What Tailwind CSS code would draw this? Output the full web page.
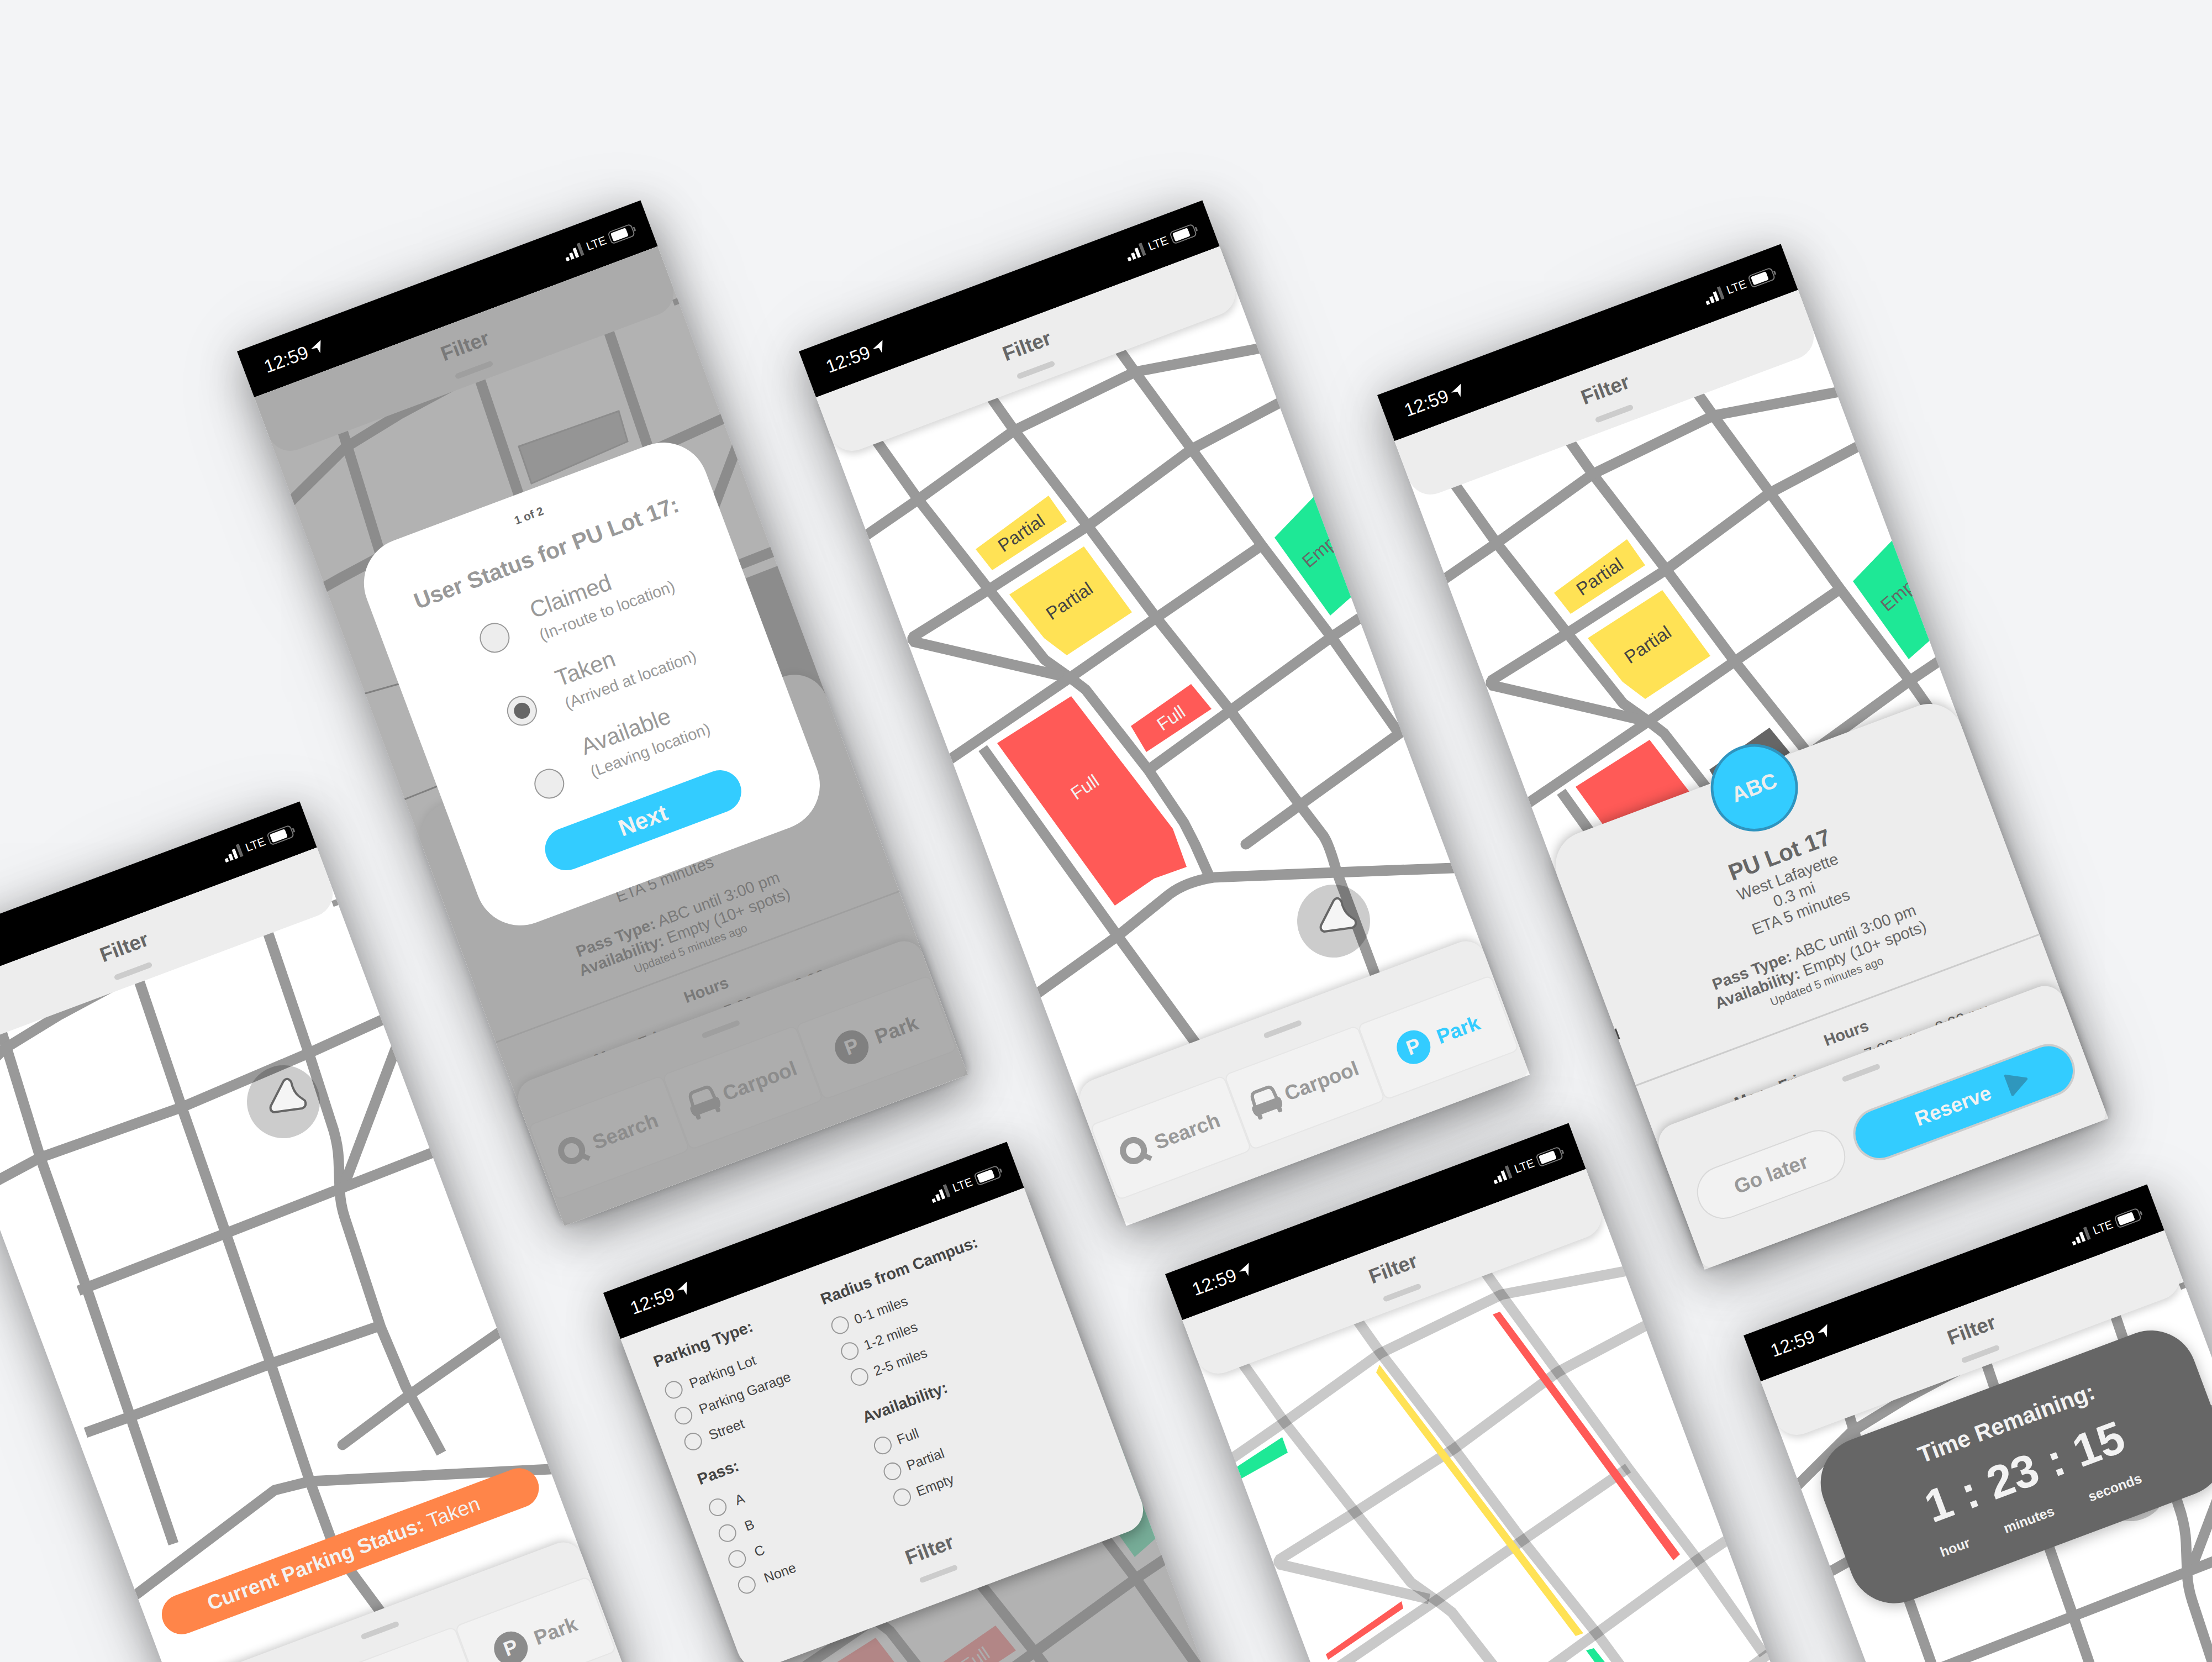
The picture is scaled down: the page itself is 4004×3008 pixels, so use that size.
<!DOCTYPE html>
<html lang="en">
<head>
<meta charset="utf-8">
<meta name="viewport" content="width=device-width, initial-scale=1">
<title>Campus parking – screens</title>
<script src="https://cdn.jsdelivr.net/npm/@tailwindcss/browser@4"></script>
</head>
<body class="bg-[#f3f4f6] font-['Liberation_Sans',Arial,sans-serif] text-[#666]">

<!-- Shared drawings -->
<svg class="hidden" aria-hidden="true">
  <symbol id="i-nav" viewBox="0 0 24 24"><path d="M23 1 L14 23 L12 12 L1 10 Z" fill="#fff"/></symbol>
  <symbol id="i-signal" viewBox="0 0 36 24">
    <rect x="0" y="17" width="6" height="7" rx="1" fill="#fff"/><rect x="9" y="12" width="6" height="12" rx="1" fill="#fff"/>
    <rect x="18" y="6" width="6" height="18" rx="1" fill="#fff"/><rect x="28" y="0" width="6" height="24" rx="1" fill="#666"/>
  </symbol>
  <symbol id="i-battery" viewBox="0 0 50 24">
    <rect x="1" y="1" width="44" height="22" rx="6" fill="none" stroke="#777" stroke-width="2"/>
    <rect x="5" y="4" width="29" height="16" rx="3" fill="#fff"/><path d="M47 8 a4 4 0 0 1 0 8 Z" fill="#777"/>
  </symbol>
  <symbol id="i-search" viewBox="0 0 56 56">
    <circle cx="26" cy="26" r="19" fill="none" stroke="currentColor" stroke-width="11"/>
    <path d="M37 37 L51 51" stroke="currentColor" stroke-width="9"/>
  </symbol>
  <symbol id="i-car" viewBox="0 0 56 56">
    <path d="M7 28 L8 13 Q9 4 17 4 H39 Q47 4 48 13 L49 28" fill="none" stroke="currentColor" stroke-width="6"/>
    <path d="M3 27 H53 Q56 29 56 34 Q56 42 52 46 H51 V51 Q51 54 48 54 H46 Q43 54 43 51 V46 H13 V51 Q13 54 10 54 H8 Q5 54 5 51 V46 H4 Q0 42 0 34 Q0 29 3 27 Z" fill="currentColor"/>
  </symbol>

  <!-- Streets of the west campus grid -->
  <symbol id="streets-a" viewBox="0 0 780 1690">
    <g transform="rotate(20.53)" fill="none" stroke-width="19" stroke-linejoin="round">
      <path d="M100 104 L142 164 L216 268 L344 431 L445 558 L493 592 L519 612 L633 758 L697 853 L717 892 L743 950"/>
      <path d="M320 44 L390 143 L523 316 L647 482 L781 650 L907 821 L949 876 Q960 892 973 940 L1042 1125 L1056 1163"/>
      <path d="M552 -42 L609 38 L711 177 L838 351 L964 517 L1084 688"/>
      <path d="M870 -12 L831 -5 L609 37 L390 143 L216 268 L100 348"/>
      <path d="M890 82 L868 94 L711 177 L523 316 L344 431 L206 517 L206 525 L478 588" stroke-linejoin="bevel"/>
      <path d="M838 351 L647 482 L493 589 L255 751"/>
      <path d="M1040 466 L964 517 L781 650 L636 755"/>
      <path d="M1110 675 L907 821 L809 892" stroke-linecap="round"/>
      <path d="M1210 934 L973 943 L750 952 Q700 960 670 983 L577 1058 L415 1174"/>
      <path d="M333 718 L577 1058 L717 1250 L740 1281"/>
    </g>
  </symbol>

  <!-- Streets of the east campus grid -->
  <symbol id="streets-b" viewBox="0 0 780 1690">
    <g transform="rotate(20.53)" fill="none" stroke-width="19" stroke-linejoin="round">
      <path d="M170 76 L192 147 L261 371 L343 602 L424 840 L502 1070"/>
      <path d="M420 -6 L440 52 L517 280 L597 509 L678 744 L749 957 L786 1058 Q800 1090 826 1124 L877 1193 L900 1225"/>
      <path d="M655 -90 L673 -36 L747 182 L792 322 Q800 350 801 375 L803 430 Q804 455 812 480 L877 678 L922 785 L987 906"/>
      <path d="M450 30 L398 58 L297 112 L196 174 L103 266 L80 290"/>
      <path d="M910 108 L747 182 L517 280 L261 371 L188 410 L140 437"/>
      <path d="M915 145 L903 177 L812 418"/>
      <path d="M1000 351 L971 362 L802 428 L597 508 L330 612"/>
      <path d="M874 676 L678 744 L424 840 L343 869"/>
      <path d="M1110 675 L1091 688 L930 800 L808 891" stroke-linecap="round"/>
      <path d="M1210 934 L1184 935 L749 957 L685 973 L437 1160 L415 1175"/>
      <path d="M790 -88 L816 -98" stroke-width="11"/>
    </g>
  </symbol>

  <symbol id="lots" viewBox="0 0 780 1690">
    <g transform="rotate(20.53)" font-family="'Liberation Sans', Arial, sans-serif" font-size="33" text-anchor="middle">
      <path d="M320 358 L452 261 L485 308 L350 396 Z M381 440 L516 353 L603 472 L485 550 L444 519 Z" fill="#ffe255"/>
      <path d="M861 337 L960 234 L1040 409 L962 478 Z" fill="#1ee896"/>
      <path d="M359 709 L493 624 L677 864 L702 933 L643 954 L572 1003 Z" fill="#ff5a57"/>
      <text transform="translate(409 338) rotate(-34)" fill="#444">Partial</text>
      <text transform="translate(496 461) rotate(-34)" fill="#444">Partial</text>
      <text transform="translate(923 393) rotate(-40)" fill="#666" text-anchor="start">Empty</text>
      <text transform="translate(524 798) rotate(-34)" fill="#f2f2f2">Full</text>
    </g>
  </symbol>

  <symbol id="marker" viewBox="0 0 132 132">
    <circle cx="66" cy="66" r="66" fill="#000" fill-opacity=".2"/>
    <g transform="translate(66 66) rotate(20.53) translate(-66 -66)">
      <path d="M66 29 Q73 20 80 30 Q84 48 94 56 L105 64 Q109 74 100 78 L49 85 Q41 83 43 74 Z" fill="#f5f5f5" stroke="#666" stroke-width="4" stroke-linejoin="round"/>
    </g>
  </symbol>
</svg>

<div class="relative min-h-screen w-full overflow-hidden">

  <!-- Screen: user status dialog -->
  <section class="absolute left-[429px] top-[636px] flex h-[1690px] w-[780px] origin-top-left -rotate-[20.53deg] flex-col bg-white shadow-[0_20px_80px_rgba(0,0,0,0.42),0_20px_160px_rgba(0,0,0,0.1)]">
    <svg class="absolute inset-0 size-full" viewBox="0 0 780 1690" aria-hidden="true">
      <use href="#streets-b" stroke="#999"/>
      <g transform="rotate(20.53)">
        <path d="M510 172 L691 108 L707 163 L533 239 Z" fill="#b0b0b0" stroke="#999" stroke-width="3"/>
        <path d="M917 412 L1010 376 L1110 660 L1010 660 Z" fill="#999"/>
        <path d="M225 621 L310 597 M295 814 L370 784" stroke="#777" stroke-width="3"/>
      </g>
    </svg>
    <div class="relative flex h-[89px] items-center justify-between bg-black pl-[37px] pr-[27px] text-white">
      <div class="flex items-center gap-[6px] text-[33px] leading-none">12:59<svg class="size-6"><use href="#i-nav"/></svg></div>
      <div class="flex items-center gap-[7px] text-[21px] leading-none"><svg class="h-6 w-9"><use href="#i-signal"/></svg>LTE<svg class="h-6 w-[50px]"><use href="#i-battery"/></svg></div>
    </div>
    <header class="relative flex h-[116px] flex-col items-center rounded-b-[42px] bg-[#ededed] pt-7">
      <button class="text-[37px] font-bold leading-[38px]">Filter</button>
      <span class="mt-[22px] h-[10px] w-[72px] rounded-full bg-[#ccc]"></span>
    </header>
    <div class="absolute inset-x-0 bottom-0 top-[898px] flex flex-col items-center rounded-t-[62px] bg-[#ededed] pt-[251px] text-[29px] leading-[34px] shadow-[0_-4px_16px_rgba(0,0,0,0.15)]">
      <p>ETA 5 minutes</p>
      <p class="mt-[34px]"><b>Pass Type:</b> ABC until 3:00 pm</p>
      <p><b>Availability:</b> Empty (10+ spots)</p>
      <p class="text-[21px] leading-[30px]">Updated 5 minutes ago</p>
      <span class="mt-[19px] h-[3px] w-full shrink-0 bg-[#ccc]"></span>
      <h3 class="mt-[26px] font-bold">Hours</h3>
      <dl class="mt-[15px] flex w-full pl-[157px]"><dt class="w-[251px] font-bold">Mon - Fri:</dt><dd>7:00 am – 8:00 pm</dd></dl>
    </div>
    <nav class="relative mt-auto flex h-[269px] flex-col items-center rounded-b-[16px] rounded-t-[36px] bg-[#ededed] px-1 pt-[30px] text-[37px] font-bold text-[#999] shadow-[0_-4px_16px_rgba(0,0,0,0.2)]">
      <span class="h-[10px] w-[72px] rounded-full bg-[#ccc]"></span>
      <div class="mt-[37px] grid h-[142px] w-full grid-cols-3 gap-1">
        <button class="flex items-center justify-center gap-3 rounded-[10px] bg-[#f2f2f2] pr-1 outline-2 outline-[#e6e6e6]"><svg class="size-14"><use href="#i-search"/></svg>Search</button>
        <button class="flex items-center justify-center gap-[10px] rounded-[10px] bg-[#f2f2f2] outline-2 outline-[#e6e6e6]"><svg class="size-14"><use href="#i-car"/></svg>Carpool</button>
        <button class="flex items-center justify-center gap-4 rounded-[10px] bg-[#f2f2f2] text-[#777] outline-2 outline-[#e6e6e6]"><span class="flex size-[61px] items-center justify-center rounded-full bg-[#777] text-[#ededed]">P</span>Park</button>
      </div>
    </nav>
    <div class="absolute inset-x-0 bottom-0 top-[89px] bg-[#858585]/63"></div>

    <form class="absolute left-[63px] top-[420px] flex h-[738px] w-[655px] flex-col items-center rounded-[82px] bg-white pt-8 text-[#999]">
      <p class="text-[21px] font-bold leading-6 text-[#666]">1 of 2</p>
      <h2 class="mt-[37px] pl-[12px] text-[41px] font-bold leading-[50px]">User Status for PU Lot 17:</h2>
      <fieldset class="mt-[39px] flex w-full gap-[51px] pl-[165px]">
        <div class="flex flex-col gap-[87px] pt-5">
          <input id="st-claimed" name="status" type="radio" class="size-[54px] appearance-none rounded-full border-2 border-[#999] bg-[#ededed] checked:bg-[radial-gradient(circle,#666_0_14px,#ededed_15px)]">
          <input id="st-taken" name="status" type="radio" checked class="size-[54px] appearance-none rounded-full border-2 border-[#999] bg-[#ededed] checked:bg-[radial-gradient(circle,#666_0_14px,#ededed_15px)]">
          <input id="st-available" name="status" type="radio" class="size-[54px] appearance-none rounded-full border-2 border-[#999] bg-[#ededed] checked:bg-[radial-gradient(circle,#666_0_14px,#ededed_15px)]">
        </div>
        <div class="flex flex-col gap-[38px] text-[29px] leading-[44px]">
          <label for="st-claimed"><span class="block text-[42px] leading-[50px]">Claimed</span>(In-route to location)</label>
          <label for="st-taken"><span class="block text-[42px] leading-[50px]">Taken</span>(Arrived at location)</label>
          <label for="st-available"><span class="block text-[42px] leading-[50px]">Available</span>(Leaving location)</label>
        </div>
      </fieldset>
      <button type="button" class="mt-[54px] h-[77px] w-[374px] rounded-full bg-[#3cf] text-[42px] font-bold leading-none text-[#f2f2f2]">Next</button>
    </form>
  </section>

  <!-- Screen: lot map -->
  <section class="absolute left-[1446px] top-[636px] flex h-[1690px] w-[780px] origin-top-left -rotate-[20.53deg] flex-col bg-white shadow-[0_20px_80px_rgba(0,0,0,0.42),0_20px_160px_rgba(0,0,0,0.1)]">
    <svg class="absolute inset-0 size-full" viewBox="0 0 780 1690">
      <use href="#streets-a" stroke="#999"/>
      <use href="#lots"/>
      <g transform="rotate(20.53)">
        <path d="M601 678 L710 602 L747 647 L629 725 Z" fill="#ff5a57"/>
        <text transform="translate(680 673) rotate(-34)" font-size="33" text-anchor="middle" fill="#f2f2f2">Full</text>
        <use href="#marker" transform="translate(968 1031) rotate(-20.53)" x="-66" y="-66" width="132" height="132"/>
      </g>
    </svg>
    <div class="relative flex h-[89px] items-center justify-between bg-black pl-[37px] pr-[27px] text-white">
      <div class="flex items-center gap-[6px] text-[33px] leading-none">12:59<svg class="size-6"><use href="#i-nav"/></svg></div>
      <div class="flex items-center gap-[7px] text-[21px] leading-none"><svg class="h-6 w-9"><use href="#i-signal"/></svg>LTE<svg class="h-6 w-[50px]"><use href="#i-battery"/></svg></div>
    </div>
    <header class="relative flex h-[116px] flex-col items-center rounded-b-[42px] bg-[#ededed] pt-7 shadow-[0_6px_14px_rgba(0,0,0,0.16)]">
      <button class="text-[37px] font-bold leading-[38px]">Filter</button>
      <span class="mt-[22px] h-[10px] w-[72px] rounded-full bg-[#ccc]"></span>
    </header>
    <nav class="relative mt-auto flex h-[269px] flex-col items-center rounded-b-[16px] rounded-t-[36px] bg-[#ededed] px-1 pt-[30px] text-[37px] font-bold text-[#999] shadow-[0_-4px_16px_rgba(0,0,0,0.2)]">
      <span class="h-[10px] w-[72px] rounded-full bg-[#ccc]"></span>
      <div class="mt-[37px] grid h-[142px] w-full grid-cols-3 gap-1">
        <button class="flex items-center justify-center gap-3 rounded-[10px] bg-[#f2f2f2] pr-1 outline-2 outline-[#e6e6e6]"><svg class="size-14"><use href="#i-search"/></svg>Search</button>
        <button class="flex items-center justify-center gap-[10px] rounded-[10px] bg-[#f2f2f2] outline-2 outline-[#e6e6e6]"><svg class="size-14"><use href="#i-car"/></svg>Carpool</button>
        <button class="flex items-center justify-center gap-4 rounded-[10px] bg-[#f2f2f2] text-[#3cf] outline-2 outline-[#e6e6e6]"><span class="flex size-[61px] items-center justify-center rounded-full bg-[#3cf] text-[#f2f2f2]">P</span>Park</button>
      </div>
    </nav>
  </section>

  <!-- Screen: lot details -->
  <section class="absolute left-[2493px] top-[715px] flex h-[1690px] w-[780px] origin-top-left -rotate-[20.53deg] flex-col bg-white shadow-[0_20px_80px_rgba(0,0,0,0.42),0_20px_160px_rgba(0,0,0,0.1)]">
    <svg class="absolute inset-0 size-full" viewBox="0 0 780 1690">
      <use href="#streets-a" stroke="#999"/>
      <use href="#lots"/>
      <path d="M601 678 L710 602 L747 647 L629 725 Z" fill="#666" transform="rotate(20.53)"/>
    </svg>
    <div class="relative flex h-[89px] items-center justify-between bg-black pl-[37px] pr-[27px] text-white">
      <div class="flex items-center gap-[6px] text-[33px] leading-none">12:59<svg class="size-6"><use href="#i-nav"/></svg></div>
      <div class="flex items-center gap-[7px] text-[21px] leading-none"><svg class="h-6 w-9"><use href="#i-signal"/></svg>LTE<svg class="h-6 w-[50px]"><use href="#i-battery"/></svg></div>
    </div>
    <header class="relative flex h-[116px] flex-col items-center rounded-b-[42px] bg-[#ededed] pt-7">
      <button class="text-[37px] font-bold leading-[38px]">Filter</button>
      <span class="mt-[22px] h-[10px] w-[72px] rounded-full bg-[#ccc]"></span>
    </header>
    <div class="absolute inset-x-0 bottom-0 top-[870px] flex flex-col items-center rounded-t-[62px] bg-[#ededed] pt-[140px] text-[29px] leading-[34px] shadow-[0_-4px_20px_rgba(0,0,0,0.25)]">
      <span class="absolute left-1/2 top-[-44px] flex size-[158px] -translate-x-1/2 items-center justify-center rounded-full border-[5px] border-[#2f94bf] bg-[#3cf] text-[39px] font-bold text-[#ededed]">ABC</span>
      <span class="absolute left-0 top-[355px] h-5 w-[3px] bg-[#444]"></span>
      <h2 class="text-[42px] font-bold leading-[50px]">PU Lot 17</h2>
      <p>West Lafayette</p>
      <p>0.3 mi</p>
      <p>ETA 5 minutes</p>
      <p class="mt-[34px]"><b>Pass Type:</b> ABC until 3:00 pm</p>
      <p><b>Availability:</b> Empty (10+ spots)</p>
      <p class="text-[21px] leading-[30px]">Updated 5 minutes ago</p>
      <span class="mt-[39px] h-[3px] w-full shrink-0 bg-[#ccc]"></span>
      <h3 class="mt-[26px] font-bold">Hours</h3>
      <dl class="mt-[15px] flex w-full pl-[157px]"><dt class="w-[251px] font-bold">Mon - Fri:</dt><dd>7:00 am – 8:00 pm</dd></dl>
    </div>
    <div class="relative mt-auto flex h-[267px] flex-col items-center rounded-b-[16px] rounded-t-[36px] bg-[#ededed] pl-[33px] pr-[23px] pt-7 text-[37px] font-bold shadow-[0_-4px_16px_rgba(0,0,0,0.2)]">
      <span class="mr-[10px] h-[10px] w-[72px] rounded-full bg-[#ccc]"></span>
      <div class="mt-[62px] flex h-[96px] w-full gap-[22px]">
        <button class="w-[280px] rounded-full border-2 border-[#d9d9d9] bg-[#f2f2f2] text-[#999]">Go later</button>
        <button class="flex flex-1 items-center justify-end gap-8 rounded-full border-4 border-[#ccc] bg-[#3cf] pr-[84px] text-[#f2f2f2]">Reserve
          <svg class="h-11 w-10" viewBox="0 0 40 44" aria-hidden="true"><path d="M4 4 L37 22 L4 40 Z" fill="#2f97bd" stroke="#2f97bd" stroke-width="5" stroke-linejoin="round"/></svg>
        </button>
      </div>
    </div>
  </section>

  <!-- Screen: current status -->
  <section class="absolute left-[-188px] top-[1724px] flex h-[1690px] w-[780px] origin-top-left -rotate-[20.53deg] flex-col bg-white shadow-[0_20px_80px_rgba(0,0,0,0.42),0_20px_160px_rgba(0,0,0,0.1)]">
    <svg class="absolute inset-0 size-full" viewBox="0 0 780 1690">
      <use href="#streets-b" stroke="#999"/>
      <g transform="rotate(20.53)"><use href="#marker" transform="translate(701 270) rotate(-20.53)" x="-66" y="-66" width="132" height="132"/></g>
    </svg>
    <div class="relative flex h-[89px] items-center justify-end bg-black pr-[27px] text-white">
      <div class="flex items-center gap-[7px] text-[21px] leading-none"><svg class="h-6 w-9"><use href="#i-signal"/></svg>LTE<svg class="h-6 w-[50px]"><use href="#i-battery"/></svg></div>
    </div>
    <header class="relative flex h-[116px] flex-col items-center rounded-b-[42px] bg-[#ededed] pt-7">
      <button class="text-[37px] font-bold leading-[38px]">Filter</button>
      <span class="mt-[22px] h-[10px] w-[72px] rounded-full bg-[#ccc]"></span>
    </header>
    <p class="relative mx-[28px] mt-auto mb-[82px] h-[72px] rounded-full bg-[#ff8549] pr-[26px] text-center text-[37px] leading-[72px] text-[#f2f2f2]"><b>Current Parking Status:</b> Taken</p>
    <nav class="relative flex h-[269px] flex-col items-center rounded-b-[16px] rounded-t-[36px] bg-[#ededed] px-1 pt-[30px] text-[37px] font-bold text-[#999] shadow-[0_-4px_16px_rgba(0,0,0,0.2)]">
      <span class="h-[10px] w-[72px] rounded-full bg-[#ccc]"></span>
      <div class="mt-[37px] grid h-[142px] w-full grid-cols-3 gap-1">
        <span class="rounded-[10px] bg-[#f2f2f2] outline-2 outline-[#e6e6e6]"></span>
        <span class="rounded-[10px] bg-[#f2f2f2] outline-2 outline-[#e6e6e6]"></span>
        <button class="flex items-center justify-center gap-4 rounded-[10px] bg-[#f2f2f2] outline-2 outline-[#e6e6e6]"><span class="flex size-[61px] items-center justify-center rounded-full bg-[#8c8c8c] text-[#f2f2f2]">P</span>Park</button>
      </div>
    </nav>
  </section>

  <!-- Screen: filter panel -->
  <section class="absolute left-[1092px] top-[2340px] flex h-[1690px] w-[780px] origin-top-left -rotate-[20.53deg] flex-col bg-white shadow-[0_20px_80px_rgba(0,0,0,0.42),0_20px_160px_rgba(0,0,0,0.1)]">
    <svg class="absolute inset-0 size-full" viewBox="0 0 780 1690">
      <use href="#streets-a" stroke="#999"/>
      <g transform="rotate(20.53)">
        <path d="M861 337 L960 234 L1040 409 L962 478 Z" fill="#5ceeb5"/>
        <path d="M359 709 L493 624 L677 864 L702 933 L643 954 L572 1003 Z M601 678 L710 602 L747 647 L629 725 Z" fill="#ff8787"/>
        <text transform="translate(680 673) rotate(-34)" font-size="33" text-anchor="middle" fill="#f2f2f2">Full</text>
      </g>
    </svg>
    <div class="absolute inset-0 bg-[#858585]/63"></div>
    <div class="relative flex h-[89px] items-center justify-between bg-black pl-[37px] pr-[27px] text-white">
      <div class="flex items-center gap-[6px] text-[33px] leading-none">12:59<svg class="size-6"><use href="#i-nav"/></svg></div>
      <div class="flex items-center gap-[7px] text-[21px] leading-none"><svg class="h-6 w-9"><use href="#i-signal"/></svg>LTE<svg class="h-6 w-[50px]"><use href="#i-battery"/></svg></div>
    </div>
    <form class="relative flex h-[649px] flex-col items-center rounded-b-[42px] bg-[#ededed] shadow-[0_8px_24px_rgba(0,0,0,0.3)]">
      <div class="grid w-full grid-cols-[319px_1fr] gap-y-[35px] pl-[42px] pt-[44px] text-[25px] leading-8 text-[#444]">
        <fieldset class="flex flex-col gap-[18px]">
          <legend class="float-left mb-[8px] w-full text-[29px] font-bold leading-[34px]">Parking Type:</legend>
          <label class="flex items-center gap-[15px]"><input type="radio" name="type" class="size-8 appearance-none rounded-full border-2 border-[#999]">Parking Lot</label>
          <label class="flex items-center gap-[15px]"><input type="radio" name="type" class="size-8 appearance-none rounded-full border-2 border-[#999]">Parking Garage</label>
          <label class="flex items-center gap-[15px]"><input type="radio" name="type" class="size-8 appearance-none rounded-full border-2 border-[#999]">Street</label>
        </fieldset>
        <fieldset class="flex flex-col gap-[18px] pl-[4px]">
          <legend class="float-left mb-[4px] w-full text-[29px] font-bold leading-[34px]">Radius from Campus:</legend>
          <label class="flex items-center gap-[12px]"><input type="radio" name="radius" class="size-8 appearance-none rounded-full border-2 border-[#999]">0-1 miles</label>
          <label class="flex items-center gap-[12px]"><input type="radio" name="radius" class="size-8 appearance-none rounded-full border-2 border-[#999]">1-2 miles</label>
          <label class="flex items-center gap-[12px]"><input type="radio" name="radius" class="size-8 appearance-none rounded-full border-2 border-[#999]">2-5 miles</label>
        </fieldset>
        <fieldset class="flex flex-col gap-[18px]">
          <legend class="float-left mb-[8px] w-full text-[29px] font-bold leading-[34px]">Pass:</legend>
          <label class="flex items-center gap-[18px]"><input type="radio" name="pass" class="size-8 appearance-none rounded-full border-2 border-[#999]">A</label>
          <label class="flex items-center gap-[18px]"><input type="radio" name="pass" class="size-8 appearance-none rounded-full border-2 border-[#999]">B</label>
          <label class="flex items-center gap-[18px]"><input type="radio" name="pass" class="size-8 appearance-none rounded-full border-2 border-[#999]">C</label>
          <label class="flex items-center gap-[18px]"><input type="radio" name="pass" class="size-8 appearance-none rounded-full border-2 border-[#999]">None</label>
        </fieldset>
        <fieldset class="flex flex-col gap-[18px]">
          <legend class="float-left mb-[8px] w-full text-[29px] font-bold leading-[34px]">Availability:</legend>
          <label class="flex items-center gap-[12px]"><input type="radio" name="avail" class="size-8 appearance-none rounded-full border-2 border-[#999]">Full</label>
          <label class="flex items-center gap-[12px]"><input type="radio" name="avail" class="size-8 appearance-none rounded-full border-2 border-[#999]">Partial</label>
          <label class="flex items-center gap-[12px]"><input type="radio" name="avail" class="size-8 appearance-none rounded-full border-2 border-[#999]">Empty</label>
        </fieldset>
      </div>
      <button type="button" class="mt-[22px] text-[37px] font-bold leading-[38px]">Filter</button>
      <span class="mt-[22px] h-[10px] w-[72px] rounded-full bg-[#ccc]"></span>
    </form>
  </section>

  <!-- Screen: street parking map -->
  <section class="absolute left-[2109px] top-[2306px] flex h-[1690px] w-[780px] origin-top-left -rotate-[20.53deg] flex-col bg-white shadow-[0_20px_80px_rgba(0,0,0,0.42),0_20px_160px_rgba(0,0,0,0.1)]">
    <svg class="absolute inset-0 size-full" viewBox="0 0 780 1690" aria-hidden="true">
      <use href="#streets-a" stroke="#000" stroke-opacity=".21"/>
      <g transform="rotate(20.53)">
        <path d="M388 164 L382 178 L743 655 L757 650 Z" fill="#ffe255"/>
        <path d="M593 73 L606 68 L932 507 L920 518 Z M428 592 L431 605 L295 698 L291 688 Z" fill="#ff5a57"/>
        <path d="M212 295 L222 323 L138 370 L128 350 Z M762 681 L776 677 L830 745 L816 755 Z" fill="#1ee896"/>
      </g>
    </svg>
    <div class="relative flex h-[89px] items-center justify-between bg-black pl-[37px] pr-[27px] text-white">
      <div class="flex items-center gap-[6px] text-[33px] leading-none">12:59<svg class="size-6"><use href="#i-nav"/></svg></div>
      <div class="flex items-center gap-[7px] text-[21px] leading-none"><svg class="h-6 w-9"><use href="#i-signal"/></svg>LTE<svg class="h-6 w-[50px]"><use href="#i-battery"/></svg></div>
    </div>
    <header class="relative flex h-[116px] flex-col items-center rounded-b-[42px] bg-[#ededed] pt-7 shadow-[0_6px_14px_rgba(0,0,0,0.16)]">
      <button class="text-[37px] font-bold leading-[38px]">Filter</button>
      <span class="mt-[22px] h-[10px] w-[72px] rounded-full bg-[#ccc]"></span>
    </header>
  </section>

  <!-- Screen: time remaining -->
  <section class="absolute left-[3156px] top-[2417px] flex h-[1690px] w-[780px] origin-top-left -rotate-[20.53deg] flex-col bg-white shadow-[0_20px_80px_rgba(0,0,0,0.42),0_20px_160px_rgba(0,0,0,0.1)]">
    <svg class="absolute inset-0 size-full" viewBox="0 0 780 1690" aria-hidden="true">
      <use href="#streets-b" stroke="#999"/>
      <g transform="rotate(20.53)"><use href="#marker" transform="translate(701 270) rotate(-20.53)" x="-66" y="-66" width="132" height="132"/></g>
    </svg>
    <div class="relative flex h-[89px] items-center justify-between bg-black pl-[37px] pr-[27px] text-white">
      <div class="flex items-center gap-[6px] text-[33px] leading-none">12:59<svg class="size-6"><use href="#i-nav"/></svg></div>
      <div class="flex items-center gap-[7px] text-[21px] leading-none"><svg class="h-6 w-9"><use href="#i-signal"/></svg>LTE<svg class="h-6 w-[50px]"><use href="#i-battery"/></svg></div>
    </div>
    <header class="relative flex h-[116px] flex-col items-center rounded-b-[42px] bg-[#ededed] pt-7 shadow-[0_6px_14px_rgba(0,0,0,0.16)]">
      <button class="text-[37px] font-bold leading-[38px]">Filter</button>
      <span class="mt-[22px] h-[10px] w-[72px] rounded-full bg-[#ccc]"></span>
    </header>
    <div class="relative mx-8 mt-[40px] flex h-[310px] flex-col items-center rounded-[83px] bg-[#666] pt-[46px] font-bold text-[#f2f2f2] shadow-[0_6px_24px_rgba(0,0,0,0.25)]">
      <h2 class="text-[42px] leading-[50px]">Time Remaining:</h2>
      <div class="mt-[21px] flex justify-center text-center text-[83px] leading-[96px]">
        <div class="flex w-[46px] flex-col items-center">1<span class="mt-[20px] whitespace-nowrap text-[25px] leading-[30px]">hour</span></div>
        <div class="w-[74px]">:</div>
        <div class="flex w-[92px] flex-col items-center">23<span class="mt-[20px] whitespace-nowrap text-[25px] leading-[30px]">minutes</span></div>
        <div class="w-[74px]">:</div>
        <div class="flex w-[92px] flex-col items-center">15<span class="mt-[20px] whitespace-nowrap text-[25px] leading-[30px]">seconds</span></div>
      </div>
    </div>
  </section>

</div>
</body>
</html>
